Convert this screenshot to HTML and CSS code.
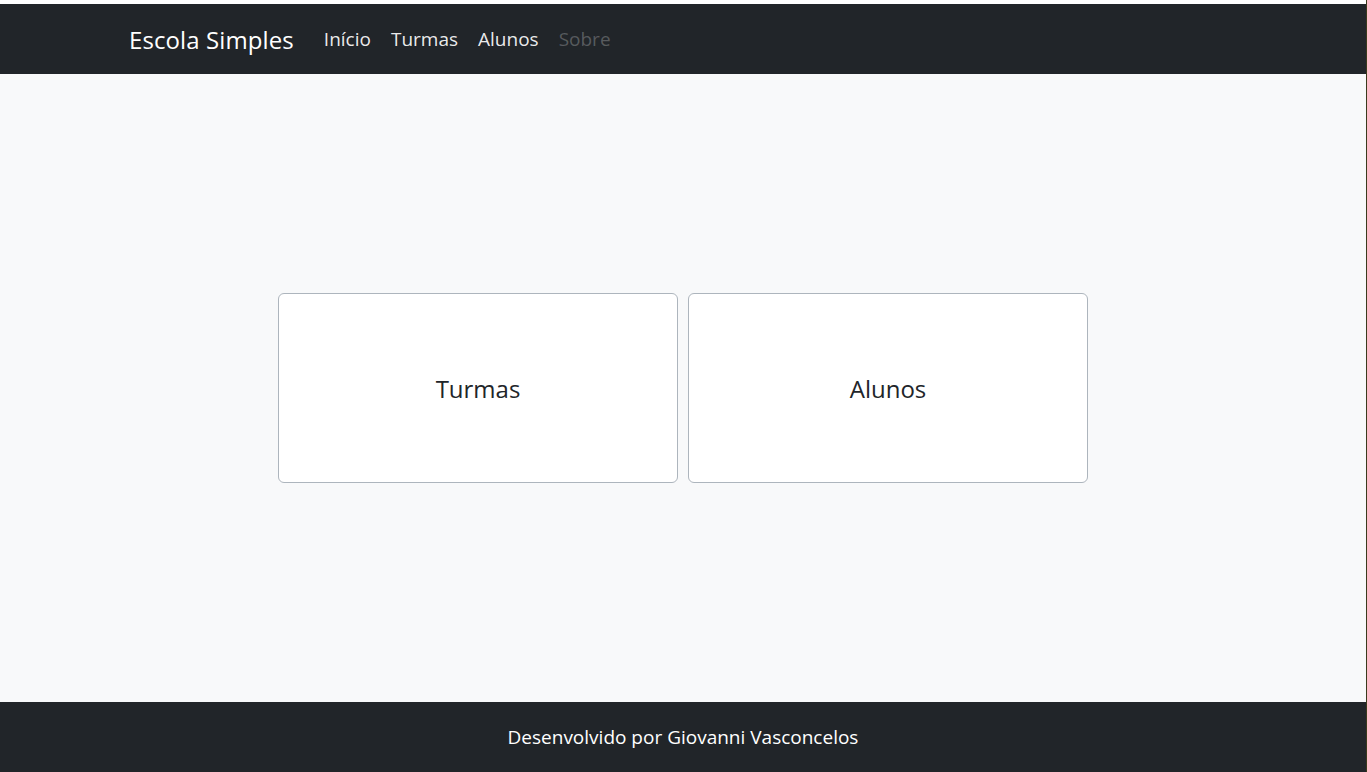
FILE: index.html
```html
<!DOCTYPE html>
<html lang="pt-BR">
<head>
<meta charset="utf-8">
<title>Escola Simples</title>
<link rel="stylesheet" href="styles.css">
</head>
<body>
<div class="top-strip"></div>
<nav class="navbar">
  <div class="container">
    <a class="brand" href="#">Escola Simples</a>
    <ul class="nav">
      <li><a class="nav-link" href="#">Início</a></li>
      <li><a class="nav-link" href="#">Turmas</a></li>
      <li><a class="nav-link" href="#">Alunos</a></li>
      <li><a class="nav-link disabled" href="#">Sobre</a></li>
    </ul>
  </div>
</nav>
<main class="content">
  <div class="cards">
    <a class="card" href="#"><span class="card-title">Turmas</span></a>
    <a class="card" href="#"><span class="card-title">Alunos</span></a>
  </div>
</main>
<footer class="footer">
  <p>Desenvolvido por Giovanni Vasconcelos</p>
</footer>
</body>
</html>
```
FILE: styles.css
```css
* { box-sizing: border-box; }
html { margin: 0; padding: 0; height: 100%; background: #3a3a1c; }
body {
  margin: 0;
  padding: 0;
  width: 1366px;
  height: 100%;
  font-family: "Open Sans", "Noto Sans", sans-serif;
  font-size: 16px;
  color: #212529;
  background: #f8f9fa;
  display: flex;
  flex-direction: column;
  min-height: 772px;
}
.top-strip { height: 4px; background: #ffffff; flex: none; }
.navbar {
  background: #212529;
  height: 70px;
  flex: none;
  display: flex;
  align-items: center;
}
.container {
  width: 1140px;
  margin: 0 auto;
  padding: 0 12px;
  display: flex;
  align-items: center;
}
.brand {
  color: #fff;
  text-decoration: none;
  font-size: 24px;
  letter-spacing: 0.1px;
  margin-left: 4px;
  margin-right: 30px;
}
.nav { list-style: none; margin: 0; padding: 0; display: flex; gap: 20px; }
.nav-link {
  color: rgba(255,255,255,0.92);
  text-decoration: none;
  font-size: 19px;
}
.nav-link.disabled { color: rgba(255,255,255,0.25); }
.content {
  flex: 1;
  display: flex;
  align-items: center;
  justify-content: center;
}
.cards { display: flex; gap: 10px; }
.card {
  width: 400px;
  height: 190px;
  background: #fff;
  border: 1px solid #adb5bd;
  border-radius: 6px;
  display: flex;
  align-items: center;
  justify-content: center;
  text-decoration: none;
  color: #212529;
}
.card-title { font-size: 24px; }
.footer {
  background: #212529;
  height: 70px;
  flex: none;
  display: flex;
  align-items: center;
  justify-content: center;
}
.footer p { margin: 0; color: #fff; font-size: 19px; }
```
